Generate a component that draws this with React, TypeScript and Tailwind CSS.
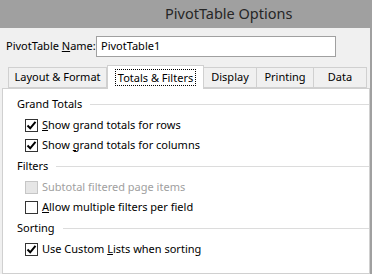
import React from 'react';

const font = { fontFamily: '"Noto Sans", "Open Sans", sans-serif' };

const Check = ({ checked, disabled }: { checked?: boolean; disabled?: boolean }) => (
  <span
    className={
      'flex h-[13px] w-[13px] shrink-0 items-center justify-center border ' +
      (disabled ? 'border-[#c6c6c6] bg-[#e6e6e6]' : 'border-[#333333] bg-white')
    }
  >
    {checked && (
      <svg width="11" height="11" viewBox="0 0 11 11">
        <path d="M1.5 5.5 L4.2 8.3 L9.5 1.8" fill="none" stroke="#000" strokeWidth="2" />
      </svg>
    )}
  </span>
);

const Row = ({ children, checked, disabled }: { children: React.ReactNode; checked?: boolean; disabled?: boolean }) => (
  <div className="flex h-[20px] items-center gap-[4px] whitespace-nowrap pl-[22px]">
    <Check checked={checked} disabled={disabled} />
    <span className={disabled ? 'text-[#a0a0a0]' : 'text-black'}>{children}</span>
  </div>
);

const Group = ({ title }: { title: string }) => (
  <div className="flex h-[22px] items-center gap-[8px] pl-[14px]">
    <span className="text-black">{title}</span>
    <div className="h-px flex-1 bg-[#dcdcdc]" />
  </div>
);

const tabs = [
  { label: 'Layout & Format', w: 99 },
  { label: 'Totals & Filters', w: 97, active: true },
  { label: 'Display', w: 54 },
  { label: 'Printing', w: 58 },
  { label: 'Data', w: 54 },
];

export default function App() {
  return (
    <div className="flex h-[274px] w-[372px] flex-col overflow-hidden bg-[#f0f0f0] text-[11px]" style={font}>
      <div className="flex h-[28px] shrink-0 items-center bg-[#a0a0a0] pl-[165px] text-[14.5px] text-[#262626]">
        PivotTable Options
      </div>
      <div className="flex flex-1 flex-col border-r-2 border-[#a0a0a0]">
        <div className="mt-[8px] flex h-[21px] items-center pl-[6px]">
          <span className="w-[90px] whitespace-nowrap text-black">
            PivotTable <u>N</u>ame:
          </span>
          <div className="flex h-[21px] w-[240px] items-center border border-[#a0a0a0] bg-white pl-[4px] text-black">
            PivotTable1
          </div>
        </div>
        <div className="mt-[8px] flex h-[23px] items-end pl-[8px]">
          {tabs.map((t) =>
            t.active ? (
              <div
                key={t.label}
                className="relative z-10 -mb-px flex h-[24px] items-center justify-center border border-b-0 border-[#d0d0d0] bg-white"
                style={{ width: t.w }}
              >
                <span className="border border-dotted border-black px-[2px] leading-[15px]">{t.label}</span>
              </div>
            ) : (
              <div
                key={t.label}
                className="-ml-px flex h-[21px] items-center justify-center border border-[#d0d0d0] bg-[#f0f0f0] first:ml-0"
                style={{ width: t.w }}
              >
                {t.label}
              </div>
            )
          )}
        </div>
        <div className="ml-[2px] flex-1 border border-[#d0d0d0] bg-white pt-[4px]">
          <Group title="Grand Totals" />
          <Row checked>
            <u>S</u>how grand totals for rows
          </Row>
          <Row checked>
            Show <u>g</u>rand totals for columns
          </Row>
          <Group title="Filters" />
          <Row disabled>Subtotal filtered page items</Row>
          <Row>
            <u>A</u>llow multiple filters per field
          </Row>
          <Group title="Sorting" />
          <Row checked>
            Use Custom <u>L</u>ists when sorting
          </Row>
        </div>
      </div>
    </div>
  );
}
